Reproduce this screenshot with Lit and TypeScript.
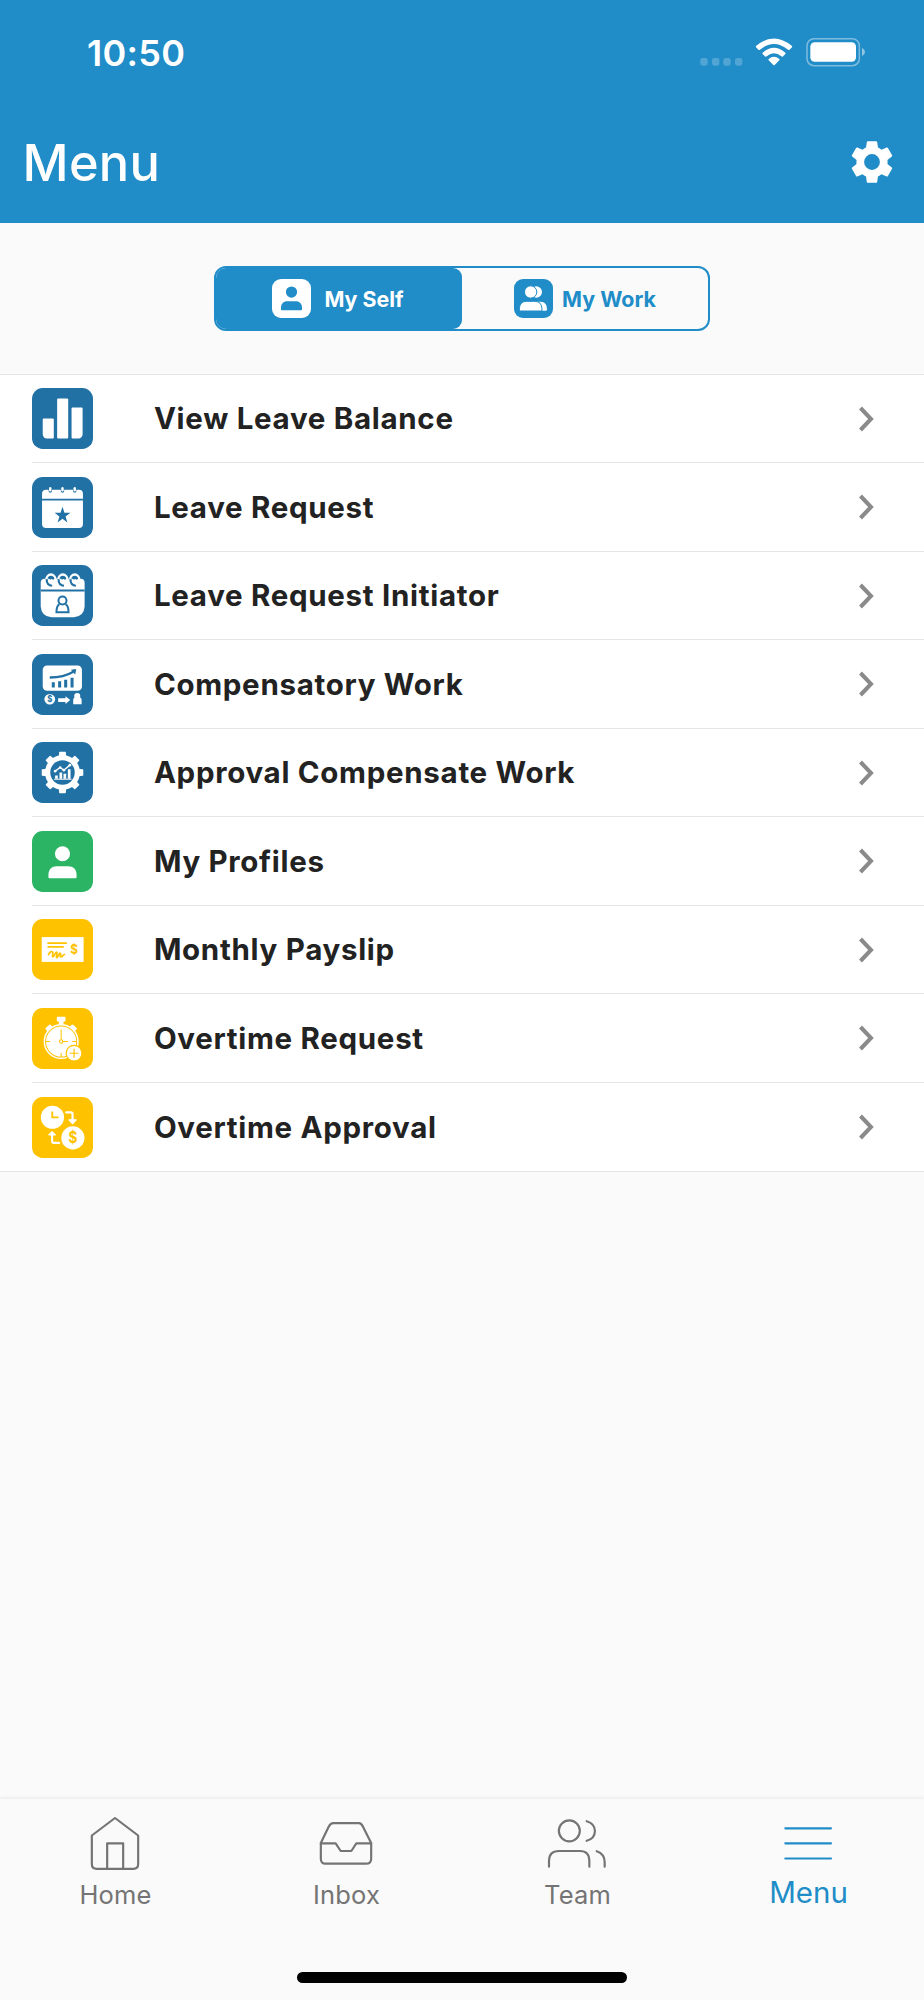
import { LitElement, html, svg, css } from "lit";
import { customElement, property, state } from "lit/decorators.js";
import { classMap } from "lit/directives/class-map.js";

const BLUE = "#2271a5";
const GREEN = "#2ab463";
const AMBER = "#fec200";

const person = (cx: number, cy: number, k: number, fill: string) => svg`
  <g transform="translate(${cx} ${cy}) scale(${k})" fill=${fill}>
    <circle cx="0" cy="-25" r="22.5"/>
    <path d="M-42 45V38C-42 22-32 12-17 12H17C32 12 42 22 42 38V45Q42 48 39 48H-39Q-42 48-42 45Z"/>
  </g>`;

const dollar = (x: number, y: number, size: number, fill: string) => svg`
  <text transform="translate(${x} ${y}) scale(0.86 1)" font-size=${size} fill=${fill} text-anchor="middle"
    font-family="Inter, sans-serif" font-weight="700">$</text>`;

const glyphs: Record<string, { color: string; art: unknown }> = {
  bars: {
    color: BLUE,
    art: svg`<g fill="#fff">
      <path d="M35 91H62Q65 91 65 94V148Q65 151 62 151H45Q32 149 32 137V94Q32 91 35 91Z"/>
      <rect x="75" y="31" width="33" height="120" rx="3"/>
      <path d="M121 58H148Q151 58 151 61V137Q150 150 138 151H121Q118 151 118 148V61Q118 58 121 58Z"/>
    </g>`,
  },
  calendarStar: {
    color: BLUE,
    art: svg`<rect x="30" y="38" width="122" height="114" rx="12" fill="#fff"/>
      <path d="M30 67.500H152" stroke=${BLUE} stroke-width="4.500"/>
      ${[54.5, 91, 127.500].map(
        (x) => svg`<path d="M${x - 5} 36V42Q${x - 5} 47 ${x} 47T${x + 5} 42V36Z" fill=${BLUE}/>
          <rect x=${x - 3.5} y="30" width="7" height="13" rx="3.500" fill="#fff"/>`,
      )}
      <path fill=${BLUE} d="M91 89L96.800 106.500L114.500 106.700L100.300 117.500L105.500 135.500L91 124.800L76.500 135.500L81.700 117.500L67.500 106.700L85.200 106.500Z"/>`,
  },
  calendarPerson: {
    color: BLUE,
    art: svg`<path fill="#fff" d="M38 41H145Q157 41 157 53V124Q155 154 125 156H58Q28 154 26 124V53Q26 41 38 41Z"/>
      <path d="M26 76H157" stroke=${BLUE} stroke-width="6"/>
      ${[56, 91.500, 127].map(
        (x) => svg`<g fill="none" transform="translate(${x} 0)">
          <path d="M-13 43A13 14 0 0 1 14 43" stroke="#fff" stroke-width="7"/>
          <path d="M-12 42C-13 55-6 62 4 62" stroke=${BLUE} stroke-width="6.500"/>
          <path d="M-4 42Q1 36 9 42" stroke=${BLUE} stroke-width="6"/>
        </g>`,
      )}
      <g fill="none" stroke=${BLUE} stroke-width="6">
        <circle cx="91" cy="106" r="12"/>
        <path d="M82 117Q73 122 73 141H109Q109 122 100 117"/>
      </g>`,
  },
  compensatory: {
    color: BLUE,
    art: svg`<rect x="32" y="34" width="117" height="76" rx="13" fill="#fff"/>
      <g fill=${BLUE}>
        <path d="M59 84h9v16h-9zM78 81h9v19h-9zM96 77h9v23h-9zM115 71h9v29h-9z"/>
        <path d="M116 47L132 45L129 61Z"/>
      </g>
      <path d="M53 70Q94 70 125 52" fill="none" stroke=${BLUE} stroke-width="7"/>
      <circle cx="53" cy="135" r="16" fill="#fff"/>
      ${dollar(53, 144.500, 27, BLUE)}
      <path fill="#fff" d="M78 132H100V126L114 137.500L100 149V143H78Z"/>
      <circle cx="135" cy="125" r="9" fill="#fff"/>
      <path fill="#fff" d="M123 150V138Q123 129 131 129H140Q148 129 148 138V150Z"/>`,
  },
  gearChart: {
    color: BLUE,
    art: svg`<g fill="#fff">
        ${[0, 45, 90, 135, 180, 225, 270, 315].map(
          (a) => svg`<path transform="rotate(${a} 91 91)" d="M80 44L81 31Q81 29 83 29H99Q101 29 101 31L102 44Z"/>`,
        )}
        <circle cx="91" cy="91" r="52"/>
      </g>
      <circle cx="91" cy="91" r="36.500" fill=${BLUE}/>
      <path d="M66 111H118" stroke="#fff" stroke-width="3"/>
      <path fill="#fff" d="M69 100h8v10h-8zM82 91h8v19h-8zM94 95h8v15h-8zM107 81h8v29h-8z"/>
      <path d="M69 87L84 76L95 84L113 69" fill="none" stroke="#fff" stroke-width="4"/>
      <g fill="#fff"><circle cx="69" cy="87" r="4"/><circle cx="84" cy="76" r="4"/><circle cx="95" cy="84" r="4"/><circle cx="113" cy="69" r="4"/></g>`,
  },
  profile: { color: GREEN, art: person(91, 93, 1, "#fff") },
  payslip: {
    color: AMBER,
    art: svg`<rect x="29" y="54" width="125" height="74" fill="#fff"/>
      <g fill="none" stroke=${AMBER} stroke-width="5" stroke-linecap="round" stroke-linejoin="round">
        <path d="M48 72H102M48 83H93"/>
        <path d="M49 106C54 96 61 95 62 100C63 105 59 112 62 113C66 113 69 99 73 99C78 99 70 115 74 115C79 115 80 101 84 102C89 104 82 112 86 113C90 114 92 107 97 106"/>
      </g>
      ${dollar(125.500, 105.500, 41, AMBER)}`,
  },
  stopwatch: {
    color: AMBER,
    art: svg`<g fill="#fff">
        <rect x="74" y="26" width="26" height="14" rx="3"/>
        <rect x="80" y="38" width="14" height="12"/>
        <g transform="rotate(-42 87 100)"><rect x="77" y="39" width="20" height="11" rx="3"/><rect x="81" y="48" width="12" height="8"/></g>
        <g transform="rotate(42 87 100)"><rect x="77" y="39" width="20" height="11" rx="3"/><rect x="81" y="48" width="12" height="8"/></g>
        <circle cx="87" cy="100" r="52.500"/>
      </g>
      <g fill="none" stroke=${AMBER} stroke-width="3">
        <circle cx="87" cy="100" r="46.500"/>
        <path d="M87 94V64M92 100H107M42 100H54M120 100H132M87 134V146"/>
        <circle cx="87" cy="100" r="5"/>
      </g>
      <circle cx="125.500" cy="135" r="23.500" fill="#fff" stroke=${AMBER} stroke-width="3.500"/>
      <path d="M112 135H139M125.500 121.500V148.500" stroke=${AMBER} stroke-width="3.500"/>`,
  },
  timeMoney: {
    color: AMBER,
    art: svg`<circle cx="61" cy="60.500" r="34.500" fill="#fff"/>
      <path d="M60.500 43V61H79" fill="none" stroke=${AMBER} stroke-width="5.500"/>
      <circle cx="122" cy="122" r="34.500" fill="#fff"/>
      ${dollar(122, 138.500, 47, AMBER)}
      <g fill="none" stroke="#fff" stroke-width="6.500" stroke-linecap="round" stroke-linejoin="round">
        <path d="M102 46H116Q121 46 121 51V74"/>
        <path d="M81 137H66Q60 137 60 131V108"/>
      </g>
      <path fill="#fff" stroke="#fff" stroke-width="3" stroke-linejoin="round" d="M110 68H132L121 80ZM50 113H70L60 103Z"/>`,
  },
};

const tabs = [
  {
    id: "Home",
    art: svg`<path d="M99 15L168.500 67.500V153Q168.500 167.500 154 167.500H44Q29.500 167.500 29.500 153V67.500Z"/>
      <path d="M75.500 167V91H123.500V167"/>`,
  },
  {
    id: "Inbox",
    art: svg`<path d="M23.500 90L47 41Q53 30.500 60 30.500H138Q145 30.500 150 41L174.500 90V137Q174.500 152 159 152H38Q23.500 152 23.500 137Z"/>
      <path d="M23.500 91H68L83 114H115L130 91H174.500"/>`,
  },
  {
    id: "Team",
    art: svg`<circle cx="76" cy="53.500" r="31.500"/>
      <path d="M128 24.500C161 34 161 74 128 83.500M15 161V144Q15 114 45 114H108Q136 114 136 144V161M158 114.500Q182 122 182 148V161"/>`,
  },
  { id: "Menu", art: svg`<path d="M31 46H168M31 91H168M31 136.500H168"/>` },
];

@customElement("menu-row")
class MenuRow extends LitElement {
  @property() label = "";
  @property() icon = "";

  static styles = css`
    :host { display: block; height: 88.5px; padding-left: 32.4px; box-sizing: border-box; }
    .row { display: flex; align-items: center; height: 100%; box-sizing: border-box; border-bottom: 1px solid #e6e6e6; }
    :host(:last-of-type) .row { border-bottom: 0; }
    .tile { width: 61px; height: 61px; flex: none; }
    .label { margin: -1px 0 0 60.5px; flex: 1; font-size: 29.5px; font-weight: 650; letter-spacing: 0.7px; color: #222; line-height: 40px; white-space: nowrap; }
    .chevron { width: 18px; height: 28px; margin-right: 49px; flex: none; }
  `;

  render() {
    const g = glyphs[this.icon];
    return html`<div class="row">
      <svg class="tile" viewBox="0 0 182 182">
        <rect width="182" height="182" rx="32" fill=${g?.color ?? BLUE}></rect>
        ${g?.art}
      </svg>
      <span class="label">${this.label}</span>
      <svg class="chevron" viewBox="0 0 18 28"><path d="M3.500 3L14 14L3.500 25" fill="none" stroke="#8a8a8a" stroke-width="4"/></svg>
    </div>`;
  }
}

@customElement("app-root")
class AppRoot extends LitElement {
  @state() private segment = "self";
  @state() private tab = "Menu";

  private items = [
    ["View Leave Balance", "bars"],
    ["Leave Request", "calendarStar"],
    ["Leave Request Initiator", "calendarPerson"],
    ["Compensatory Work", "compensatory"],
    ["Approval Compensate Work", "gearChart"],
    ["My Profiles", "profile"],
    ["Monthly Payslip", "payslip"],
    ["Overtime Request", "stopwatch"],
    ["Overtime Approval", "timeMoney"],
  ];

  static styles = css`
    :host { display: flex; flex-direction: column; width: 924px; height: 2000px; overflow: hidden; background: #fafafa; font-family: Inter, "Liberation Sans", sans-serif; }
    header { height: 222.6px; flex: none; background: #208cc8; color: #fff; }
    .status { display: flex; align-items: center; height: 105px; padding: 0 58px 0 87px; }
    .time { flex: 1; font-size: 36px; font-weight: 600; line-height: 44px; letter-spacing: 0.3px; }
    .indicators { width: 166px; height: 30px; display: block; margin-bottom: 1px; }
    .bar { display: flex; align-items: center; justify-content: space-between; height: 116px; padding: 0 26px 0 22.500px; }
    h1 { margin: 0; font-size: 50.5px; line-height: 60px; font-weight: 500; letter-spacing: 0.3px; }
    .gear { width: 52px; height: 52px; display: block; margin-bottom: 2px; }
    .switch { flex: none; height: 151.4px; display: flex; justify-content: center; align-items: center; }
    .segments { display: flex; width: 496px; height: 65px; box-sizing: border-box; border: 2px solid #208cc8; border-radius: 12px; overflow: hidden; }
    .segment { flex: 1; display: flex; align-items: center; justify-content: center; gap: 9px; color: #208cc8; font-size: 21.4px; font-weight: 700; line-height: 30px; white-space: nowrap; }
    .segment span { padding-top: 1px; }
    .segment.self { gap: 13px; padding-right: 2px; flex: 0 0 246px; box-sizing: border-box; }
    .segment.on { background: #208cc8; color: #fff; border-radius: 0 9px 9px 0; }
    .mini { width: 39px; height: 39px; flex: none; }
    .list { flex: none; background: #fff; border-top: 1px solid #e6e6e6; border-bottom: 1px solid #e6e6e6; }
    .space { flex: 1; }
    .tabs { flex: none; height: 201.500px; display: flex; flex-direction: column; background: #fafafa; box-shadow: 0 -1px 4px rgba(0, 0, 0, 0.08); }
    .items { display: grid; grid-template-columns: repeat(4, 1fr); height: 173px; }
    .tab { display: flex; flex-direction: column; align-items: center; padding-top: 14.500px; color: #747474; }
    .glyph { width: 66px; height: 60px; margin-right: 1px; fill: none; stroke: currentColor; stroke-width: 6.5; stroke-linecap: round; stroke-linejoin: round; }
    .name { margin-top: 7px; font-size: 25.5px; line-height: 30px; letter-spacing: 0.2px; }
    .tab.on { color: #208cc8; }
    .tab.on .name { font-size: 29.5px; margin-top: 3.5px; letter-spacing: 0; }
    .handle { width: 330px; height: 11px; border-radius: 6px; background: #000; align-self: center; }
  `;

  render() {
    return html`
      <header>
        <div class="status">
          <span class="time">10:50</span>
          <svg class="indicators" viewBox="0 0 498 90" fill="#fff">
            <g opacity="0.22">
              ${[0, 35, 69, 104].map((x) => svg`<rect x=${x + 1} y="63" width="22" height="23" rx="7"/>`)}
            </g>
            <path d="M168 27Q222-18 276 27Q277 29 276 31L268 39Q266 40 264 38Q222 4 180 38Q178 40 176 39L168 31Q167 29 168 27Z"/>
            <path d="M188 47Q222 17 256 47Q258 49 256 51L248 59Q246 60 244 58Q222 39 200 58Q198 60 196 59L188 51Q186 49 188 47Z"/>
            <path d="M206 66Q222 53 238 66Q240 68 238 70L224 84Q222 86 220 84L206 70Q204 68 206 66Z"/>
            <rect x="321" y="5" width="157" height="81" rx="21" fill="none" stroke="#fff" stroke-opacity="0.42" stroke-width="4.500"/>
            <rect x="331" y="16" width="137" height="58" rx="13"/>
            <path d="M486 32Q495 37 495 45T486 58Z" fill-opacity="0.5"/>
          </svg>
        </div>
        <div class="bar">
          <h1>Menu</h1>
          <svg class="gear" viewBox="0 0 24 24"><path fill="#fff" d="M19.140 12.940c.04-.3.06-.61.06-.94 0-.32-.02-.64-.07-.94l2.030-1.580c.18-.14.23-.41.12-.61l-1.920-3.320c-.12-.22-.37-.29-.59-.22l-2.390.96c-.5-.38-1.030-.7-1.620-.94l-.36-2.540c-.04-.24-.24-.41-.48-.41h-3.840c-.24 0-.43.17-.47.41l-.36 2.540c-.59.24-1.130.57-1.620.94l-2.390-.96c-.22-.08-.47 0-.59.22L2.740 8.870c-.12.21-.08.47.12.61l2.030 1.580c-.05.3-.09.63-.09.94s.02.64.07.94l-2.030 1.580c-.18.14-.23.41-.12.61l1.920 3.320c.12.22.37.29.59.22l2.390-.96c.5.38 1.030.7 1.620.94l.36 2.540c.05.24.24.41.48.41h3.840c.24 0 .44-.17.47-.41l.36-2.540c.59-.24 1.130-.56 1.620-.94l2.390.96c.22.08.47 0 .59-.22l1.920-3.320c.12-.22.07-.47-.12-.61l-2.010-1.580zM12 15.650a3.650 3.650 0 1 1 0-7.300a3.650 3.650 0 0 1 0 7.300z"/></svg>
        </div>
      </header>
      <div class="switch">
        <div class="segments">
          <div class=${classMap({ segment: true, self: true, on: this.segment === "self" })} @click=${() => (this.segment = "self")}>
            <svg class="mini" viewBox="0 0 117 117"><rect width="117" height="117" rx="27" fill="#fff"/>${person(58.500, 58, 0.75, "#208cc8")}</svg>
            <span>My Self</span>
          </div>
          <div class=${classMap({ segment: true, on: this.segment === "work" })} @click=${() => (this.segment = "work")}>
            <svg class="mini" viewBox="0 0 117 117">
              <rect width="117" height="117" rx="27" fill="#208cc8"/>
              <circle cx="67" cy="39" r="17" fill="#fff"/>
              <path d="M60 95V68H80Q99 68 99 91Q99 95 96 95Z" fill="#fff"/>
              <circle cx="50" cy="39" r="18.500" fill="#fff" stroke="#208cc8" stroke-width="3"/>
              <path d="M16 96V90Q17 67 37 67H63Q83 67 84 90V96Z" fill="#fff" stroke="#208cc8" stroke-width="3"/>
            </svg>
            <span>My Work</span>
          </div>
        </div>
      </div>
      <div class="list">
        ${this.items.map(([label, icon]) => html`<menu-row .label=${label} .icon=${icon}></menu-row>`)}
      </div>
      <div class="space"></div>
      <nav class="tabs">
        <div class="items">
          ${tabs.map(
            (t) => html`<div class=${classMap({ tab: true, on: this.tab === t.id })} @click=${() => (this.tab = t.id)}>
              <svg class="glyph" viewBox="0 0 198 180">${t.art}</svg>
              <span class="name">${t.id}</span>
            </div>`,
          )}
        </div>
        <div class="handle"></div>
      </nav>
    `;
  }
}
